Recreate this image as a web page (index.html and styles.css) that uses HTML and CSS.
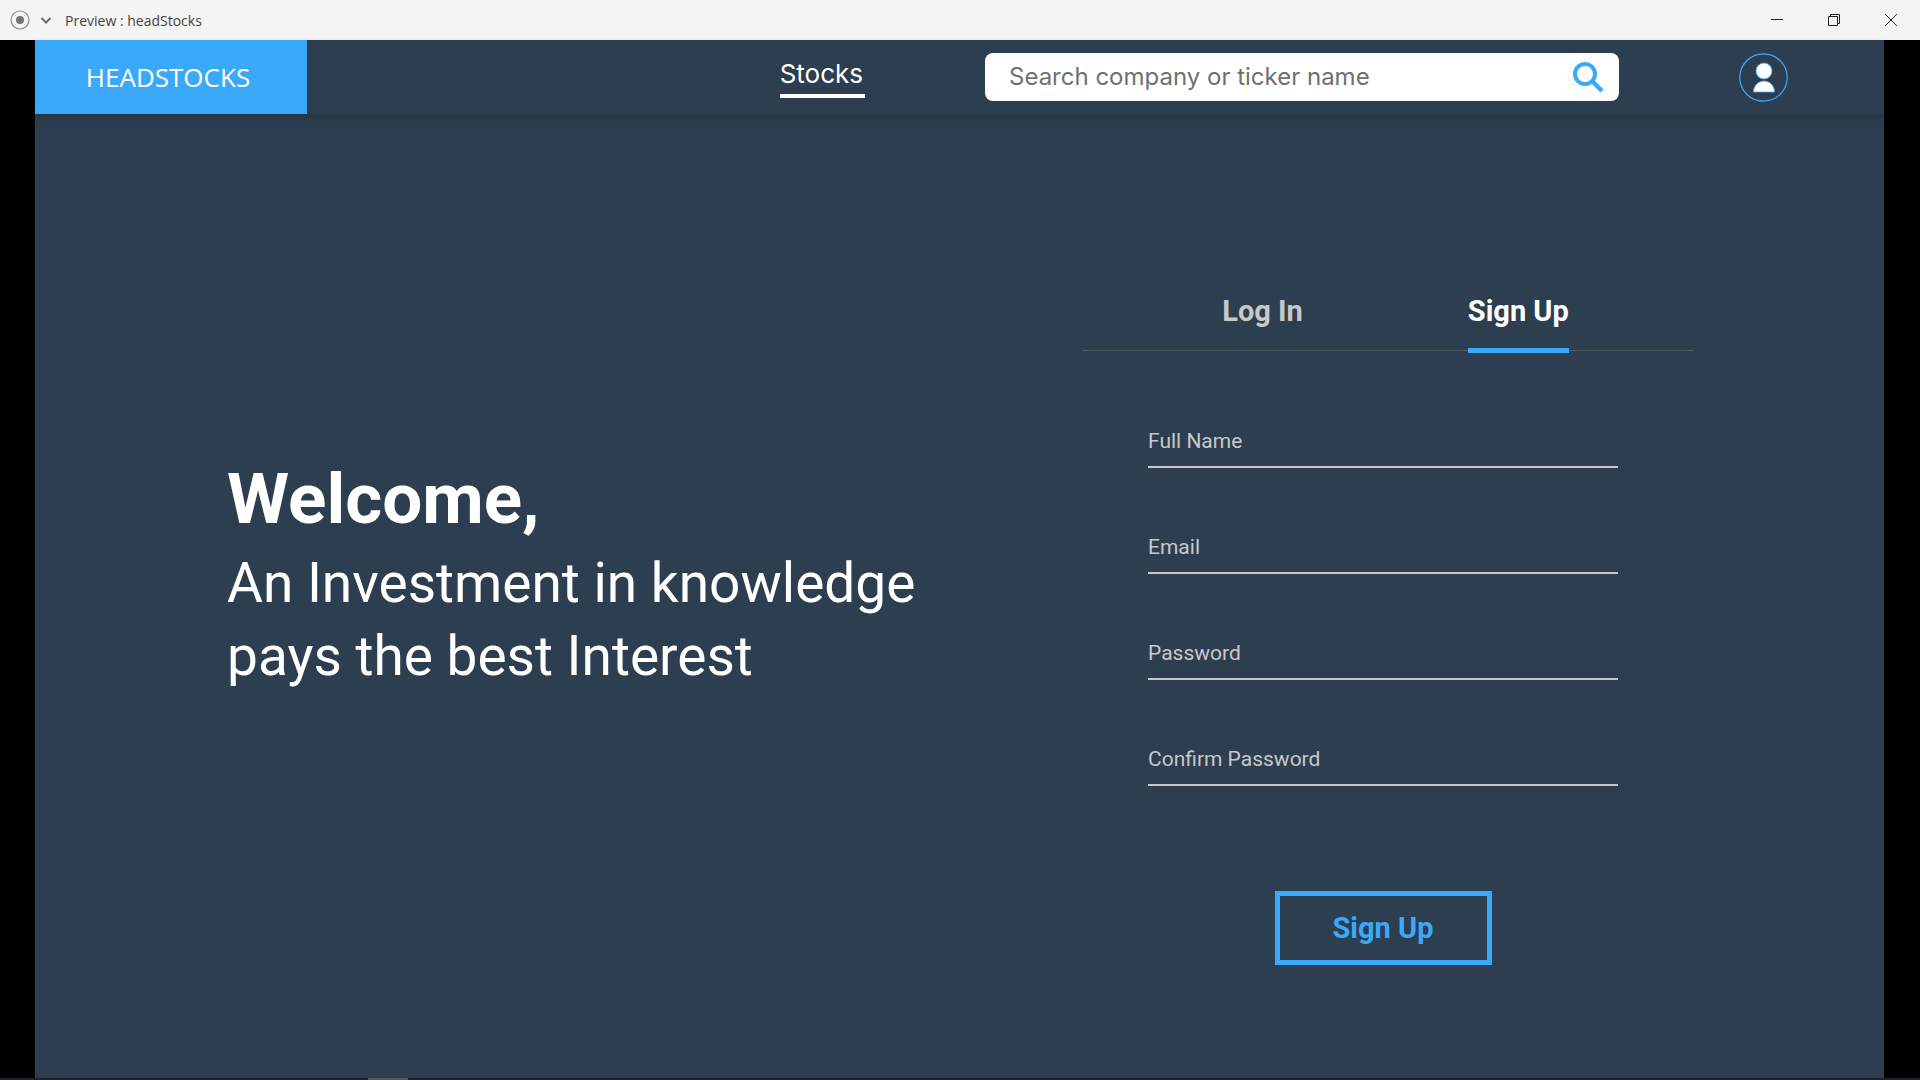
FILE: index.html
```html
<!DOCTYPE html>
<html lang="en">
<head>
<meta charset="utf-8">
<meta name="viewport" content="width=device-width, initial-scale=1">
<title>Preview : headStocks</title>
<link rel="stylesheet" href="styles.css">
</head>
<body>
<div class="titlebar">
  <button class="title-btn" aria-label="Record">
    <svg width="20" height="20" viewBox="0 0 20 20"><circle cx="10" cy="10" r="9" fill="none" stroke="#8e8e8e" stroke-width="1.2"/><circle cx="10" cy="10" r="4" fill="#747474"/></svg>
  </button>
  <button class="title-btn" aria-label="Options">
    <svg width="12" height="20" viewBox="0 0 12 20"><path d="M1.5 8 6 12.500 10.500 8" fill="none" stroke="#6b6b6b" stroke-width="2"/></svg>
  </button>
  <span class="title">Preview : headStocks</span>
  <div class="window-controls">
    <button class="title-btn" aria-label="Minimize"><svg width="12" height="12" viewBox="0 0 12 12" stroke="#222"><path d="M0 5.500H12"/></svg></button>
    <button class="title-btn" aria-label="Restore"><svg width="12" height="12" viewBox="0 0 12 12" fill="none" stroke="#222"><path d="M.5 2.500H9.500V11.500H.5ZM2.500 2.500V.5H11.500V9.500H9.500"/></svg></button>
    <button class="title-btn" aria-label="Close"><svg width="12" height="12" viewBox="0 0 12 12" stroke="#222"><path d="M0 0 12 12M12 0 0 12"/></svg></button>
  </div>
</div>
<div class="app">
  <header class="header">
    <a class="logo" href="#">HEADSTOCKS</a>
    <nav class="nav"><a class="nav-link" href="#">Stocks</a></nav>
    <form class="search" role="search">
      <input class="search-input" type="search" aria-label="Search company or ticker name" placeholder="Search company or ticker name">
      <button class="icon-btn" type="submit" aria-label="Search">
        <svg width="31" height="31" viewBox="0 0 31 31" fill="none" stroke="#3ba9f9"><circle cx="12" cy="12" r="10" stroke-width="4"/><path d="M19 19 29 29" stroke-width="4.500"/></svg>
      </button>
    </form>
    <button class="icon-btn" aria-label="Account">
      <svg width="49" height="49" viewBox="0 0 49 49"><circle cx="24.500" cy="24.500" r="23.700" fill="none" stroke="#3ba9f9" stroke-width="1.200"/><g fill="#fff" stroke="#3ba9f9" stroke-width=".8"><circle cx="25" cy="18" r="8"/><path d="M14.500 39C14.500 32.500 19.500 28 25 28S35.500 32.500 35.500 39Z"/></g></svg>
    </button>
  </header>
  <main class="main">
    <section class="hero">
      <h1 class="hero-title">Welcome,</h1>
      <p class="hero-text">An Investment in knowledge<br>pays the best Interest</p>
    </section>
    <section class="panel">
      <div class="tabs" role="tablist">
        <button class="tab" role="tab" aria-selected="false">Log In</button>
        <button class="tab tab-active" role="tab" aria-selected="true">Sign Up</button>
      </div>
      <form class="form">
        <input class="field" type="text" aria-label="Full Name" placeholder="Full Name">
        <input class="field" type="email" aria-label="Email" placeholder="Email">
        <input class="field" type="password" aria-label="Password" placeholder="Password">
        <input class="field" type="password" aria-label="Confirm Password" placeholder="Confirm Password">
        <button class="submit" type="submit">Sign Up</button>
      </form>
    </section>
  </main>
</div>
<div class="taskbar"><div class="taskbar-item"></div></div>
</body>
</html>
```
FILE: styles.css
```css
* { box-sizing: border-box; }

body {
  margin: 0;
  min-height: 100vh;
  display: flex;
  flex-direction: column;
  background: #000;
  font-family: Roboto, sans-serif;
}

button {
  padding: 0;
  border: 0;
  background: none;
  font: inherit;
  color: inherit;
  cursor: pointer;
}

svg { display: block; }

a { color: inherit; text-decoration: none; }

.titlebar {
  display: flex;
  align-items: center;
  gap: 10px;
  height: 40px;
  padding: 0 23px 0 10px;
  background: #f4f4f4;
  color: #444;
}

.title {
  margin-left: 3px;
  padding-top: 2px;
  font: 14px/20px "Open Sans", sans-serif;
}

.window-controls {
  display: flex;
  gap: 45px;
  margin-left: auto;
}

.app {
  flex: 1;
  display: flex;
  flex-direction: column;
  margin: 0 36px 0 35px;
  background: #2d3e50;
  color: #fff;
}

.header {
  display: flex;
  align-items: center;
  height: 74px;
  padding-right: 96px;
  box-shadow: 0 3px 6px rgba(0, 0, 0, 0.2);
}

.logo {
  display: flex;
  align-items: center;
  justify-content: center;
  align-self: stretch;
  width: 272px;
  padding-right: 42px;
  padding-left: 36px;
  background: #3ba9f9;
  font: 26px/36px "Open Sans", sans-serif;
}

.nav { margin-left: auto; }

.nav-link {
  display: block;
  padding: 2px 2px 4px 0;
  border-bottom: 4px solid #fff;
  font: 26px/32px Inter, sans-serif;
}

.search {
  flex: 0 1 634px;
  display: flex;
  align-items: center;
  height: 48px;
  margin: 0 120px;
  padding: 0 15px 0 24px;
  border-radius: 8px;
  background: #fff;
}

.search-input {
  flex: 1;
  min-width: 0;
  padding: 0;
  border: 0;
  outline: 0;
  background: none;
  font: 24px/32px Inter, sans-serif;
}

.search-input::placeholder { color: #707070; opacity: 1; }

.main {
  flex: 1;
  display: flex;
  justify-content: space-between;
  align-items: center;
  padding: 0 190px 0 192px;
}

.hero { padding-bottom: 40px; }

.hero-title {
  margin: 0 0 8px;
  font-size: 71px;
  line-height: 80px;
}

.hero-text {
  margin: 0;
  font-size: 55px;
  line-height: 73px;
}

.panel {
  flex: 0 1 611px;
  padding-top: 63px;
}

.tabs {
  display: flex;
  justify-content: center;
  gap: 165px;
  padding-right: 12px;
  padding-left: 26px;
  background: linear-gradient(#4e5963, #4e5963) left bottom 2px / 100% 1px no-repeat;
}

.tab {
  height: 62px;
  padding-bottom: 16px;
  border-bottom: 5px solid transparent;
  color: #c8c8c8;
  font-size: 29px;
  font-weight: 700;
  line-height: 36px;
}

.tab-active {
  border-bottom-color: #3ba9f9;
  color: #fff;
}

.form {
  display: flex;
  flex-direction: column;
  gap: 54px;
  margin-top: 63px;
  padding: 0 76px 0 65px;
}

.field {
  width: 100%;
  height: 52px;
  padding: 0;
  border: 0;
  border-bottom: 2px solid #c8c8c8;
  outline: 0;
  background: none;
  color: #fff;
  font: 21px/28px Roboto, sans-serif;
}

.field::placeholder { color: #c8c8c8; opacity: 1; }

.submit {
  align-self: center;
  width: 217px;
  height: 74px;
  margin-top: 51px;
  border: 5px solid #3ba9f9;
  color: #3ba9f9;
  font-size: 29px;
  font-weight: 700;
}

.taskbar {
  height: 2px;
  padding-left: 368px;
  background: #20222c;
}

.taskbar-item {
  width: 40px;
  height: 2px;
  background: #555;
}
```
